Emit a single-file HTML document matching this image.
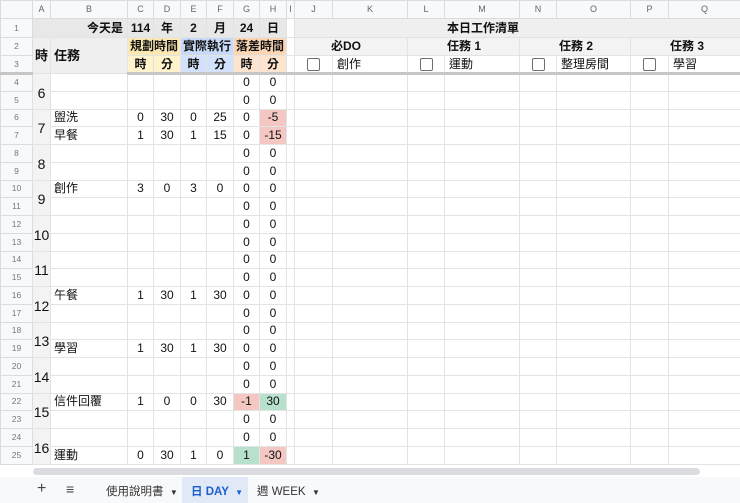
<!DOCTYPE html>
<html><head><meta charset="utf-8"><style>
*{margin:0;padding:0;box-sizing:border-box}
body{width:740px;height:503px;overflow:hidden;background:#fff;font-family:"Liberation Sans","Noto Sans CJK TC",sans-serif;position:relative}
table{border-collapse:collapse;table-layout:fixed;position:absolute;left:0;top:0;width:740px}
td{border:1px solid #e2e3e3;font-size:12px;color:#111;white-space:nowrap;overflow:hidden;height:17.75px;line-height:15px;padding:0}
tr.ch td{height:18px;background:#f8f9fa;color:#666;font-size:9px;text-align:center;border-color:#dcdcdc}
td.rh{background:#f8f9fa;color:#777;font-size:8.5px;text-align:center;border-color:#dcdcdc}
.c{text-align:center}
.b{font-weight:bold}
.hr{background:#f3f3f3;text-align:center;font-size:14px;padding-top:4px}
.g1{background:#e8e8e8;font-weight:bold;text-align:center}
.y2{background:#fce8b2;font-weight:bold;text-align:center}
.b2{background:#c9daf8;font-weight:bold;text-align:center}
.o2{background:#fcd5b4;font-weight:bold;text-align:center}
.y3{background:#fff2cc;font-weight:bold;text-align:center}
.b3{background:#d3e2fa;font-weight:bold;text-align:center}
.o3{background:#fde4cf;font-weight:bold;text-align:center}
.pk{background:#f4c7c3}
.gr{background:#b7e1cd}
tr.r3 td{border-bottom:3px solid #c6c6c6}
tr.r1 td{height:19px}
tr.r2 td,tr.r3 td{height:18px}
.cb{display:inline-block;width:13px;height:13px;border:1.6px solid #6f6f6f;border-radius:2px;vertical-align:middle}
.sb{position:absolute;left:33px;top:468px;width:667px;height:7px;background:#dadce0;border-radius:4px}
.tabs{position:absolute;left:0;top:477px;width:740px;height:26px;background:#f8f9fb;font-size:11.5px;color:#333}
.tabs span{position:absolute;top:6px}
.act{position:absolute;left:182px;top:0;width:66px;height:26px;background:#e1e9f7}
</style></head><body>
<table>
<colgroup><col style="width:32px"><col style="width:18px"><col style="width:77px"><col style="width:26px"><col style="width:27px"><col style="width:26px"><col style="width:27px"><col style="width:26px"><col style="width:27px"><col style="width:8px"><col style="width:38px"><col style="width:75px"><col style="width:37px"><col style="width:75px"><col style="width:37px"><col style="width:74px"><col style="width:38px"><col style="width:72px"></colgroup>
<tr class="ch"><td></td><td>A</td><td>B</td><td>C</td><td>D</td><td>E</td><td>F</td><td>G</td><td>H</td><td>I</td><td>J</td><td>K</td><td>L</td><td>M</td><td>N</td><td>O</td><td>P</td><td>Q</td></tr>
<tr class="r1"><td class="rh">1</td><td colspan="2" class="g1" style="text-align:right;padding-right:4px">今天是</td><td class="g1">114</td><td class="g1">年</td><td class="g1">2</td><td class="g1">月</td><td class="g1">24</td><td class="g1">日</td><td></td><td colspan="8" class="b" style="background:#efefef;padding-left:152px">本日工作清單</td></tr>
<tr class="r2"><td class="rh">2</td><td rowspan="2" class="b" style="background:#efefef;text-align:center;font-size:13px">時</td><td rowspan="2" class="b" style="background:#efefef;padding-left:3px;font-size:13px">任務</td><td colspan="2" class="y2">規劃時間</td><td colspan="2" class="b2">實際執行</td><td colspan="2" class="o2">落差時間</td><td></td><td colspan="2" class="b c" style="background:#f3f3f3;padding-right:10px">必DO</td><td colspan="2" class="b" style="background:#f3f3f3;padding-left:39px">任務 1</td><td colspan="2" class="b" style="background:#f3f3f3;padding-left:39px">任務 2</td><td colspan="2" class="b" style="background:#f3f3f3;padding-left:39px">任務 3</td></tr>
<tr class="r3"><td class="rh">3</td><td class="y3">時</td><td class="y3">分</td><td class="b3">時</td><td class="b3">分</td><td class="o3">時</td><td class="o3">分</td><td></td><td class="c"><span class="cb"></span></td><td style="padding-left:4px">創作</td><td class="c"><span class="cb"></span></td><td style="padding-left:4px">運動</td><td class="c"><span class="cb"></span></td><td style="padding-left:4px">整理房間</td><td class="c"><span class="cb"></span></td><td style="padding-left:4px">學習</td></tr>
<tr><td class="rh">4</td><td rowspan="2" class="hr">6</td><td></td><td></td><td></td><td></td><td></td><td class="c">0</td><td class="c">0</td><td></td><td></td><td></td><td></td><td></td><td></td><td></td><td></td><td></td></tr>
<tr><td class="rh">5</td><td></td><td></td><td></td><td></td><td></td><td class="c">0</td><td class="c">0</td><td></td><td></td><td></td><td></td><td></td><td></td><td></td><td></td><td></td></tr>
<tr><td class="rh">6</td><td rowspan="2" class="hr">7</td><td style="padding-left:3px">盥洗</td><td class="c">0</td><td class="c">30</td><td class="c">0</td><td class="c">25</td><td class="c">0</td><td class="c pk">-5</td><td></td><td></td><td></td><td></td><td></td><td></td><td></td><td></td><td></td></tr>
<tr><td class="rh">7</td><td style="padding-left:3px">早餐</td><td class="c">1</td><td class="c">30</td><td class="c">1</td><td class="c">15</td><td class="c">0</td><td class="c pk">-15</td><td></td><td></td><td></td><td></td><td></td><td></td><td></td><td></td><td></td></tr>
<tr><td class="rh">8</td><td rowspan="2" class="hr">8</td><td></td><td></td><td></td><td></td><td></td><td class="c">0</td><td class="c">0</td><td></td><td></td><td></td><td></td><td></td><td></td><td></td><td></td><td></td></tr>
<tr><td class="rh">9</td><td></td><td></td><td></td><td></td><td></td><td class="c">0</td><td class="c">0</td><td></td><td></td><td></td><td></td><td></td><td></td><td></td><td></td><td></td></tr>
<tr><td class="rh">10</td><td rowspan="2" class="hr">9</td><td style="padding-left:3px">創作</td><td class="c">3</td><td class="c">0</td><td class="c">3</td><td class="c">0</td><td class="c">0</td><td class="c">0</td><td></td><td></td><td></td><td></td><td></td><td></td><td></td><td></td><td></td></tr>
<tr><td class="rh">11</td><td></td><td></td><td></td><td></td><td></td><td class="c">0</td><td class="c">0</td><td></td><td></td><td></td><td></td><td></td><td></td><td></td><td></td><td></td></tr>
<tr><td class="rh">12</td><td rowspan="2" class="hr">10</td><td></td><td></td><td></td><td></td><td></td><td class="c">0</td><td class="c">0</td><td></td><td></td><td></td><td></td><td></td><td></td><td></td><td></td><td></td></tr>
<tr><td class="rh">13</td><td></td><td></td><td></td><td></td><td></td><td class="c">0</td><td class="c">0</td><td></td><td></td><td></td><td></td><td></td><td></td><td></td><td></td><td></td></tr>
<tr><td class="rh">14</td><td rowspan="2" class="hr">11</td><td></td><td></td><td></td><td></td><td></td><td class="c">0</td><td class="c">0</td><td></td><td></td><td></td><td></td><td></td><td></td><td></td><td></td><td></td></tr>
<tr><td class="rh">15</td><td></td><td></td><td></td><td></td><td></td><td class="c">0</td><td class="c">0</td><td></td><td></td><td></td><td></td><td></td><td></td><td></td><td></td><td></td></tr>
<tr><td class="rh">16</td><td rowspan="2" class="hr">12</td><td style="padding-left:3px">午餐</td><td class="c">1</td><td class="c">30</td><td class="c">1</td><td class="c">30</td><td class="c">0</td><td class="c">0</td><td></td><td></td><td></td><td></td><td></td><td></td><td></td><td></td><td></td></tr>
<tr><td class="rh">17</td><td></td><td></td><td></td><td></td><td></td><td class="c">0</td><td class="c">0</td><td></td><td></td><td></td><td></td><td></td><td></td><td></td><td></td><td></td></tr>
<tr><td class="rh">18</td><td rowspan="2" class="hr">13</td><td></td><td></td><td></td><td></td><td></td><td class="c">0</td><td class="c">0</td><td></td><td></td><td></td><td></td><td></td><td></td><td></td><td></td><td></td></tr>
<tr><td class="rh">19</td><td style="padding-left:3px">學習</td><td class="c">1</td><td class="c">30</td><td class="c">1</td><td class="c">30</td><td class="c">0</td><td class="c">0</td><td></td><td></td><td></td><td></td><td></td><td></td><td></td><td></td><td></td></tr>
<tr><td class="rh">20</td><td rowspan="2" class="hr">14</td><td></td><td></td><td></td><td></td><td></td><td class="c">0</td><td class="c">0</td><td></td><td></td><td></td><td></td><td></td><td></td><td></td><td></td><td></td></tr>
<tr><td class="rh">21</td><td></td><td></td><td></td><td></td><td></td><td class="c">0</td><td class="c">0</td><td></td><td></td><td></td><td></td><td></td><td></td><td></td><td></td><td></td></tr>
<tr><td class="rh">22</td><td rowspan="2" class="hr">15</td><td style="padding-left:3px">信件回覆</td><td class="c">1</td><td class="c">0</td><td class="c">0</td><td class="c">30</td><td class="c pk">-1</td><td class="c gr">30</td><td></td><td></td><td></td><td></td><td></td><td></td><td></td><td></td><td></td></tr>
<tr><td class="rh">23</td><td></td><td></td><td></td><td></td><td></td><td class="c">0</td><td class="c">0</td><td></td><td></td><td></td><td></td><td></td><td></td><td></td><td></td><td></td></tr>
<tr><td class="rh">24</td><td rowspan="2" class="hr">16</td><td></td><td></td><td></td><td></td><td></td><td class="c">0</td><td class="c">0</td><td></td><td></td><td></td><td></td><td></td><td></td><td></td><td></td><td></td></tr>
<tr><td class="rh">25</td><td style="padding-left:3px">運動</td><td class="c">0</td><td class="c">30</td><td class="c">1</td><td class="c">0</td><td class="c gr">1</td><td class="c pk">-30</td><td></td><td></td><td></td><td></td><td></td><td></td><td></td><td></td><td></td></tr>
</table>
<div class="sb"></div>
<div class="tabs">
<div class="act"></div>
<span style="left:37px;font-size:16px;top:3px;color:#444">+</span>
<span style="left:66px;font-size:14px;top:4px;color:#444">≡</span>
<span style="left:106px">使用說明書 &nbsp;<small style="font-size:8px">▼</small></span>
<span style="left:191px;color:#1a5fd0;font-weight:bold">日 DAY &nbsp;<small style="font-size:8px">▼</small></span>
<span style="left:257px">週 WEEK &nbsp;<small style="font-size:8px">▼</small></span>
</div>
</body></html>
